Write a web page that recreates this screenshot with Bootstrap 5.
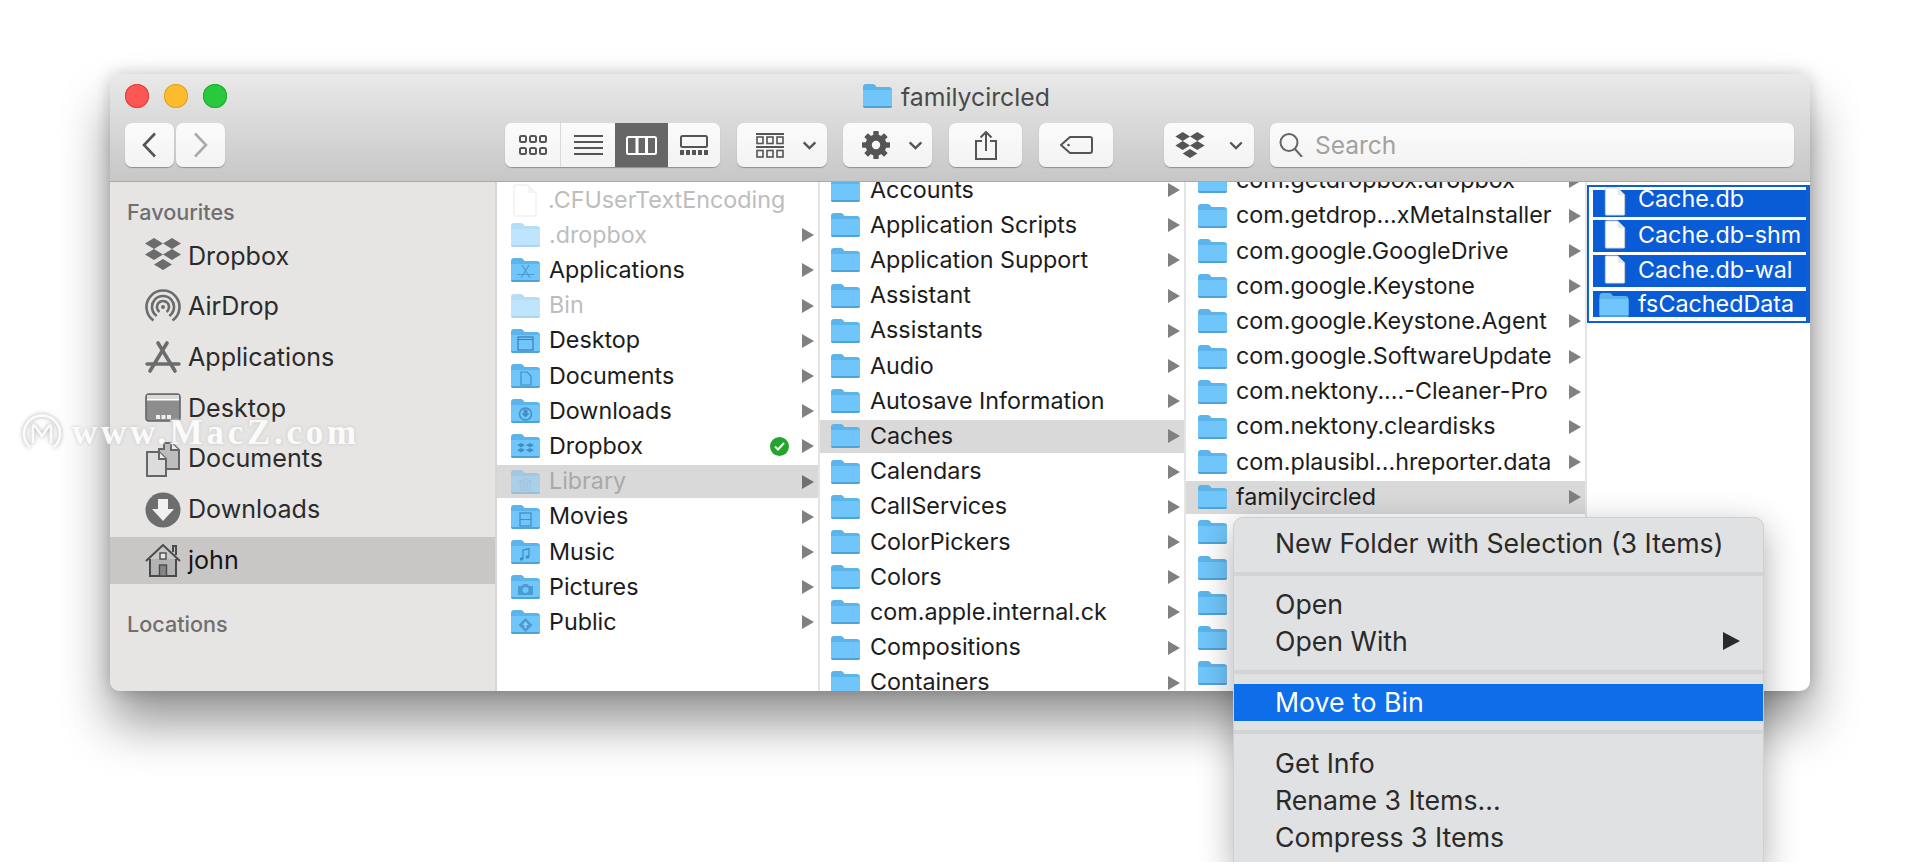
<!DOCTYPE html>
<html lang="en">
<head>
  <meta charset="UTF-8" />
  <title>familycircled</title>
  <link href="https://cdn.jsdelivr.net/npm/bootstrap@5.3.0/dist/css/bootstrap.min.css" rel="stylesheet" />
  <style>
    html, body { height: 100%; }
    body { margin: 0; background: #fff; overflow: hidden; font-family: Inter, "Liberation Sans", sans-serif; }
    .stage { position: relative; height: 862px; padding: 74px 0 0 110px; overflow: hidden; background: #fff; }
    .finder { width: 1700px; height: 617px; border-radius: 10px; overflow: hidden; display: flex; flex-direction: column;
      box-shadow: 0 32px 50px rgba(0,0,0,.42), 0 0 16px rgba(0,0,0,.2); background: #fff; }
    .finder-top { height: 108px; flex: none; padding: 10px 15px 0; background: linear-gradient(#e9e9e9, #c7c7c7); border-bottom: 1px solid #a9a9a9; }
    .light { width: 24px; height: 24px; border-radius: 50%; margin-right: 15px; }
    .light-r { background: #fc5753; box-shadow: inset 0 0 0 1px #df3d38; }
    .light-y { background: #fdbc2e; box-shadow: inset 0 0 0 1px #dd9f20; }
    .light-g { background: #28c83f; box-shadow: inset 0 0 0 1px #1daa2c; }
    .title-wrap { margin-left: 620px; height: 24px; color: #4a4a4a; font-size: 24.8px; line-height: 24px; }
    .title-wrap svg { margin-right: 8px; }
    .title-text { margin-top: 1px; }
    .tool-row { margin-top: 15px; height: 44px; }
    .tbtn { height: 44px; padding: 0; border: 0; border-radius: 7px; background: linear-gradient(#fbfbfb, #f3f3f3); box-shadow: 0 1px 1px rgba(0,0,0,.3);
      display: flex; align-items: center; justify-content: center; color: #555; }
    .tbtn svg { display: block; }
    .tbtn-wide { padding-left: 9px; }
    .view-group { display: flex; width: 215px; height: 44px; margin-left: 280px; border-radius: 7px; overflow: hidden; box-shadow: 0 1px 1px rgba(0,0,0,.3); background: #f8f8f8; }
    .view-group .tbtn { border-radius: 0; box-shadow: none; }
    .view-active { background: #666 !important; }
    .search-box { width: 524px; height: 44px; margin-left: 16px; border-radius: 7px; background: linear-gradient(#fbfbfb, #f3f3f3); box-shadow: 0 1px 1px rgba(0,0,0,.3);
      display: flex; align-items: center; padding-left: 9px; color: #a2a2a2; font-size: 24.5px; }
    .search-box svg { margin-right: 9px; }
    .finder-body { flex: 1; min-height: 0; display: flex; }
    .side { width: 387px; flex: none; background: #e6e5e4; border-right: 2px solid #d6d6d6; padding-top: 18px; color: #2b2b2b; }
    .side-head { height: 24px; line-height: 24px; padding-left: 17px; font-size: 21.6px; font-weight: 500; color: #6f6f6f; }
    .side-list { margin-top: 7px; }
    .side-item { height: 50.7px; display: flex; align-items: center; padding-left: 35px; font-size: 25.1px; border-top: 2px solid transparent; border-bottom: 2px solid transparent; background-clip: padding-box; }
    .side-item svg { width: 36px; height: 36px; margin-right: 7px; flex: none; }
    .side-on { background-color: #c8c7c6; color: #161616; }
    .side-head2 { margin-top: 26px; }
    .fcol { flex: none; overflow: hidden; border-right: 2px solid #e4e4e4; }
    .fcol1 { width: 323px; }
    .fcol2 { width: 366px; }
    .fcol3 { width: 401px; }
    .fcol4 { flex: 1; border-right: 0; }
    .fcol1 .rows { margin-top: .5px; }
    .fcol2 .rows { margin-top: -9.5px; }
    .fcol3 .rows { margin-top: -19px; }
    .frow { height: 35.2px; display: flex; align-items: center; padding-right: 4px; font-size: 23.3px; color: #1c1c1c; white-space: nowrap;
      border-top: 1px solid transparent; border-bottom: 1px solid transparent; background-clip: padding-box; }
    .fcol1 .frow { padding-left: 14px; }
    .fcol2 .frow { padding-left: 11px; }
    .fcol3 .frow { padding-left: 12px; }
    .frow .ficon { width: 29px; height: 24px; margin-right: 9px; flex: none; }
    .fcol2 .frow .ficon { margin-right: 10px; }
    .frow .fdoc { width: 24px; height: 33px; margin-left: 2px; margin-right: 11px; flex: none; }
    .frow-name { flex: 1; min-width: 0; }
    .frow-arrow { width: 0; height: 0; flex: none; border-left: 12px solid #808080; border-top: 7px solid transparent; border-bottom: 7px solid transparent; }
    .frow-dim { color: #bdbdbd; }
    .frow-dim .ficon, .frow-dim .fdoc { opacity: .45; }
    .frow-on { background-color: #d9d9d9; }
    .frow-on.frow-dim { color: #a9a9a9; }
    .frow-on.frow-dim .frow-arrow { border-left-color: #707070; }
    .check-dot { width: 19px; height: 19px; border-radius: 50%; background: #22a52b; margin-right: 13px; flex: none; display: flex; align-items: center; justify-content: center; }
    .pick-box { margin-top: 3px; height: 138px; border: 2px solid #0c5fd8; border-right-width: 4px; padding: 3px 0 0 4px; display: flex; flex-direction: column; gap: 3px; }
    .pick-row { height: 32px; background: #0a5cd6; color: #fff; font-size: 23.3px; display: flex; align-items: center; flex: none; }
    .pick-row svg { flex: none; }
    .pick-text { margin-top: -2px; }
    .pick-first { height: 27px; }
    .pick-last { height: 26px; margin-top: 1px; }
    .pick-row .fdoc { width: 22px; height: 29px; margin: -3px 12px 0 11px; }
    .pick-first .fdoc { margin-top: -4px; }
    .pick-first .pick-text { margin-top: -9px; }
    .pick-last .pick-text { margin-top: 1px; }
    .pick-row .ficon { width: 30px; height: 24px; margin: 2px 9px 0 6px; }
    .ctx-menu.dropdown-menu { display: block; position: absolute; left: 1233px; top: 517px; width: 531px; height: 350px; padding: 6.5px 0 0; margin: 0; border: 1px solid #cfcfcf;
      border-radius: 10px 10px 0 0; background: #e0e1e2; box-shadow: 0 10px 34px rgba(0,0,0,.32); font-size: 26.7px; color: #2a2a2a; }
    .ctx-menu .dropdown-item { height: 37px; line-height: 37px; padding: 0 0 0 41px; color: #2a2a2a; display: flex; justify-content: space-between; align-items: center; background: transparent; }
    .ctx-menu .dropdown-item.active { background: #0e6de8; color: #fff; }
    .ctx-menu .dropdown-divider { height: 4px; border: 0; background: #d3d4d5; opacity: 1; margin: 10.5px 0 9.5px; }
    .ctx-menu .divider-bin { margin: 9px 0 10.5px; }
    .ctx-arrow { width: 0; height: 0; margin-right: 23px; border-left: 17px solid #2a2a2a; border-top: 9.5px solid transparent; border-bottom: 9.5px solid transparent; }
    .stamp { position: absolute; left: 22px; top: 410px; display: flex; align-items: center; color: rgba(255,255,255,.85); text-shadow: 0 0 3px rgba(255,255,255,.8), 0 0 3px rgba(110,110,110,.55);
      font-family: "Liberation Serif", serif; font-weight: 700; font-size: 35px; letter-spacing: 3.75px; white-space: nowrap; line-height: 46px; }
    .stamp svg { margin-right: 10px; filter: drop-shadow(0 0 2px rgba(90,90,90,.6)); }
  </style>
</head>
<body>
  <svg class="d-none" xmlns="http://www.w3.org/2000/svg">
    <symbol id="folder" viewBox="0 0 29 24">
      <path d="M0 3q0-3 3-3h7q1.500 0 2.500 1.500l1 1.500h12q3.500 0 3.500 3v15q0 3-3 3H3q-3 0-3-3z" fill="#5db4ea"/>
      <path d="M0 6h29v15.500q0 2.500-3 2.500H3q-3 0-3-2.500z" fill="#70c6fb"/>
      <path d="M0 22h29q0 2-3 2H3q-3 0-3-2z" fill="#4fa3d8"/>
    </symbol>
    <symbol id="doc" viewBox="0 0 24 33">
      <path d="M1 2q0-1 1-1h13l8 8v22q0 1-1 1H2q-1 0-1-1z" fill="#fff" stroke="#cfcfcf"/>
      <path d="M15 1v8h8z" fill="#e9e9e9"/>
    </symbol>
    <symbol id="dbx" viewBox="0 0 36 32">
      <path d="M9 0l9 5.500-9 5.500-9-5.500zM27 0l9 5.500-9 5.500-9-5.500zM9 11l9 5.500-9 5.500-9-5.500zM27 11l9 5.500-9 5.500-9-5.500zM18 21l9 5.500-9 5.500-9-5.500z" fill="currentColor"/>
    </symbol>
    <symbol id="chev" viewBox="0 0 16 10">
      <path d="M1.500 1.500L8 8l6.500-6.500" fill="none" stroke="currentColor" stroke-width="2.600"/>
    </symbol>
  </svg>

  <div class="stage">
    <div class="finder">
      <div class="finder-top">
        <div class="d-flex align-items-center">
          <div class="light light-r"></div>
          <div class="light light-y"></div>
          <div class="light light-g"></div>
          <div class="title-wrap d-flex align-items-center">
            <svg width="31" height="24"><use href="#folder"/></svg><span class="title-text">familycircled</span>
          </div>
        </div>
        <div class="tool-row d-flex">
          <button class="btn tbtn" style="width:49px"><svg width="15" height="26" viewBox="0 0 15 26"><path d="M13 1.500L2 13l11 11.500" fill="none" stroke="#555" stroke-width="2.600"/></svg></button>
          <button class="btn tbtn" style="width:49px;margin-left:2px"><svg width="15" height="26" viewBox="0 0 15 26"><path d="M2 1.500L13 13 2 24.500" fill="none" stroke="#ababab" stroke-width="2.600"/></svg></button>

          <div class="view-group">
            <button class="btn tbtn" style="width:56px;border-right:1px solid #d9d9d9"><svg width="28" height="20" viewBox="0 0 28 20" fill="none" stroke="#555" stroke-width="2"><rect x="1" y="1" width="6" height="6" rx="1.500"/><rect x="11" y="1" width="6" height="6" rx="1.500"/><rect x="21" y="1" width="6" height="6" rx="1.500"/><rect x="1" y="13" width="6" height="6" rx="1.500"/><rect x="11" y="13" width="6" height="6" rx="1.500"/><rect x="21" y="13" width="6" height="6" rx="1.500"/></svg></button>
            <button class="btn tbtn" style="width:54px"><svg width="29" height="20" viewBox="0 0 29 20" stroke="#555" stroke-width="2"><path d="M0 1h29M0 7h29M0 13h29M0 19h29"/></svg></button>
            <button class="btn tbtn view-active" style="width:53px"><svg width="31" height="19" viewBox="0 0 31 19" fill="none" stroke="#fff" stroke-width="2"><rect x="1" y="1" width="29" height="17" rx="1.500"/><path d="M11 1v17M20.500 1v17" stroke-width="3"/></svg></button>
            <button class="btn tbtn" style="width:52px"><svg width="28" height="20" viewBox="0 0 28 20" fill="#555"><rect x="1" y="1" width="26" height="11" rx="1.500" fill="none" stroke="#555" stroke-width="2"/><rect x="0" y="15" width="4" height="5"/><rect x="6" y="15" width="4" height="5"/><rect x="12" y="15" width="4" height="5"/><rect x="18" y="15" width="4" height="5"/><rect x="24" y="15" width="4" height="5"/></svg></button>
          </div>

          <button class="btn tbtn tbtn-wide" style="width:90px;margin-left:17px"><svg width="28" height="25" viewBox="0 0 28 25" style="margin-right:18px"><path d="M0 1h28M0 14h28" stroke="#555" stroke-width="2"/><g fill="none" stroke="#555" stroke-width="1.600"><rect x="1" y="4" width="6" height="6.500"/><rect x="11" y="4" width="6" height="6.500"/><rect x="21" y="4" width="6" height="6.500"/><rect x="1" y="17.500" width="6" height="6.500"/><rect x="11" y="17.500" width="6" height="6.500"/><rect x="21" y="17.500" width="6" height="6.500"/></g></svg><svg width="15" height="9"><use href="#chev"/></svg></button>
          <button class="btn tbtn tbtn-wide" style="width:89px;margin-left:16px"><svg width="28" height="28" viewBox="0 0 28 28" style="margin-right:18px"><circle cx="14" cy="14" r="10.500" fill="#555"/><g fill="#555"><rect x="11.300" y="0" width="5.400" height="28" rx=".8"/><rect x="11.300" y="0" width="5.400" height="28" rx=".8" transform="rotate(45 14 14)"/><rect x="11.300" y="0" width="5.400" height="28" rx=".8" transform="rotate(90 14 14)"/><rect x="11.300" y="0" width="5.400" height="28" rx=".8" transform="rotate(135 14 14)"/></g><circle cx="14" cy="14" r="4.200" fill="#f8f8f8"/></svg><svg width="15" height="9"><use href="#chev"/></svg></button>
          <button class="btn tbtn" style="width:73px;margin-left:17px"><svg width="22" height="29" viewBox="0 0 22 29" fill="none" stroke="#555" stroke-width="2"><path d="M7 10H1v18h20V10h-6M11 20V1.500M5.500 6.500L11 1l5.500 5.500"/></svg></button>
          <button class="btn tbtn" style="width:74px;margin-left:17px"><svg width="33" height="18" viewBox="0 0 33 18" fill="none" stroke="#555" stroke-width="2"><path d="M10 1h20q2 0 2 2v12q0 2-2 2H10L1 9z"/><circle cx="8.500" cy="9" r="1.300" fill="#555" stroke="none"/></svg></button>
          <button class="btn tbtn" style="width:90px;margin-left:51px"><svg width="30" height="26" class="me-4" style="color:#555"><use href="#dbx"/></svg><svg width="14" height="9"><use href="#chev"/></svg></button>
          <div class="search-box"><svg width="27" height="24" viewBox="0 0 27 24" fill="none" stroke="#666" stroke-width="2"><circle cx="10" cy="9.500" r="8.500"/><path d="M16 16l7 8"/></svg>Search</div>
        </div>
      </div>

      <div class="finder-body">
        <div class="side">
          <div class="side-head">Favourites</div>
          <div class="side-list">
            <div class="side-item"><svg viewBox="0 0 36 36" style="color:#6c6c6c"><use href="#dbx" width="36" height="32"/></svg>Dropbox</div>
            <div class="side-item"><svg viewBox="0 0 36 36" fill="none" stroke="#6c6c6c" stroke-width="2.600"><path d="M8.500 31.500A16.500 16.500 0 1 1 27.500 31.500M11.700 27A11 11 0 1 1 24.300 27M14.600 22.900A6 6 0 1 1 21.400 22.900"/><circle cx="18" cy="18" r="2" fill="#6c6c6c" stroke="none"/></svg>AirDrop</div>
            <div class="side-item"><svg viewBox="0 0 36 36" fill="none" stroke="#6c6c6c"><path d="M13 3l17 28M22 3L5 31" stroke-width="3.600" stroke-linecap="round"/><path d="M2 24h32" stroke-width="3.400" stroke-linecap="round"/></svg>Applications</div>
            <div class="side-item"><svg viewBox="0 0 36 36"><rect x="1" y="4" width="34" height="27" rx="3" fill="#8d8d8d" stroke="#666" stroke-width="1.600"/><rect x="2" y="5" width="32" height="5" fill="#d9d9d9"/><rect x="2" y="9" width="32" height="1.500" fill="#fff"/><rect x="11" y="25" width="4" height="4" fill="#eee"/><rect x="16.500" y="25" width="4" height="4" fill="#eee"/><rect x="22" y="25" width="4" height="4" fill="#eee"/></svg>Desktop</div>
            <div class="side-item"><svg viewBox="0 0 36 36" stroke="#666" stroke-width="2"><path d="M19 2h8l7 7v19H14V8h5z" fill="#bdbdbd"/><path d="M2 11h12l7 7v17H2z" fill="#dcdcdc"/><path d="M14 11v7h7M26 2v7h8" fill="#eee"/></svg>Documents</div>
            <div class="side-item"><svg viewBox="0 0 36 36"><circle cx="18" cy="18" r="17.500" fill="#6d6d6d"/><path d="M13 7h10v10h6L18 29 7 17h6z" fill="#f1f1f1"/></svg>Downloads</div>
            <div class="side-item side-on"><svg viewBox="0 0 36 36" fill="none" stroke="#4a4a4a" stroke-width="2"><path d="M5 17v17h26V17" fill="#b3b3b3"/><path d="M1 19L18 3l17 16M28 10V4h3v9"/><rect x="15" y="11" width="6" height="6" fill="#e6e6e6" stroke-width="1.400"/><rect x="14.500" y="23" width="7" height="11" fill="#858585" stroke-width="1.400"/></svg>john</div>
          </div>
          <div class="side-head side-head2">Locations</div>
        </div>
        <div class="fcol fcol1"><div class="rows" id="col1"></div></div>
        <div class="fcol fcol2"><div class="rows" id="col2"></div></div>
        <div class="fcol fcol3"><div class="rows" id="col3"></div></div>
        <div class="fcol fcol4">
          <div class="pick-box">
            <div class="pick-row pick-first"><svg class="fdoc"><use href="#doc" width="22" height="29"/></svg><span class="pick-text">Cache.db</span></div>
            <div class="pick-row"><svg class="fdoc"><use href="#doc" width="22" height="29"/></svg><span class="pick-text">Cache.db-shm</span></div>
            <div class="pick-row"><svg class="fdoc"><use href="#doc" width="22" height="29"/></svg><span class="pick-text">Cache.db-wal</span></div>
            <div class="pick-row pick-last"><svg class="ficon"><use href="#folder" width="30" height="24"/></svg><span class="pick-text">fsCachedData</span></div>
          </div>
        </div>
      </div>
    </div>

    <div class="stamp">
      <svg width="40" height="40" viewBox="0 0 40 40" fill="none" stroke="rgba(255,255,255,.9)" stroke-width="2.600"><path d="M8 34A18 18 0 1 1 32 34"/><path d="M11 30V14q0-2 2-1l7 10 7-10q2-1 2 1v16"/></svg>
      <span>www.MacZ.com</span>
    </div>

    <div class="dropdown-menu ctx-menu">
      <a class="dropdown-item" href="#">New Folder with Selection (3 Items)</a>
      <hr class="dropdown-divider">
      <a class="dropdown-item" href="#">Open</a>
      <a class="dropdown-item" href="#">Open With<span class="ctx-arrow"></span></a>
      <hr class="dropdown-divider" style="margin-bottom:10px">
      <a class="dropdown-item active" href="#">Move to Bin</a>
      <hr class="dropdown-divider divider-bin">
      <a class="dropdown-item" href="#">Get Info</a>
      <a class="dropdown-item" href="#">Rename 3 Items...</a>
      <a class="dropdown-item" href="#">Compress 3 Items</a>
    </div>
  </div>

  <script src="https://cdn.jsdelivr.net/npm/bootstrap@5.3.0/dist/js/bootstrap.bundle.min.js"></script>
  <script>
    // small marks printed on the special folders
    const glyphs = {
      apps: '<path d="M11 7l8 13M18 7l-8 13M6 16.500h17" fill="none" stroke="#4a9bd1" stroke-width="1.200"/>',
      window: '<rect x="7" y="8" width="15" height="13" fill="none" stroke="#3f7fb0" stroke-width="1.200"/><path d="M7 10.500h15" stroke="#3f7fb0"/>',
      paper: '<path d="M10 8h6l4 4v9H10z" fill="none" stroke="#3f8fc4" stroke-width="1.200"/>',
      down: '<circle cx="14.500" cy="15" r="6" fill="none" stroke="#3f8fc4" stroke-width="1.500"/><path d="M12.500 10.500h4v4h2l-4 4-4-4h2z" fill="#3f8fc4"/>',
      dbx: '<path d="M10 9l4 2-4 2.500-4-2.500zM19 9l4 2-4 2.500-4-2.500zM10 14l4 2-4 2.500-4-2.500zM19 14l4 2-4 2.500-4-2.500z" fill="#3f8fc4"/>',
      bank: '<path d="M8 12l6.500-3.500L21 12zM8 20h13M10 13v6M13 13v6M16 13v6M19 13v6" fill="none" stroke="#5aa8da" stroke-width="1.100"/>',
      film: '<rect x="9" y="8" width="11" height="13" fill="none" stroke="#3f8fc4" stroke-width="1.300"/><path d="M9 14.500h11" stroke="#3f8fc4"/>',
      note: '<path d="M12 19V10l6-1.500V17" fill="none" stroke="#3f8fc4" stroke-width="1.300"/><circle cx="10.500" cy="19" r="1.800" fill="#3f8fc4"/><circle cx="16.500" cy="17" r="1.800" fill="#3f8fc4"/>',
      camera: '<path d="M7 11h4l1.500-2h4l1.500 2h4v9H7z" fill="#4a9bd1"/><circle cx="14.500" cy="15" r="3" fill="#70c6fb"/>',
      pub: '<path d="M14.500 8l7 7-7 7-7-7z" fill="#4a9bd1"/><path d="M14.500 11.500l-3 3.500h2v3h2v-3h2z" fill="#8cd2fb"/>'
    };

    function folderSvg(mark) {
      const extra = mark ? `<svg viewBox="0 0 29 24" class="position-absolute top-0 start-0" width="29" height="24">${glyphs[mark]}</svg>` : '';
      return `<span class="ficon position-relative d-block"><svg width="29" height="24" class="d-block"><use href="#folder"/></svg>${extra}</span>`;
    }

    function renderRow(r) {
      const cls = ['frow'];
      if (r.dim) cls.push('frow-dim');
      if (r.on) cls.push('frow-on');
      const icon = r.file ? '<svg class="fdoc"><use href="#doc" width="24" height="33"/></svg>' : r.blank ? folderSvg() : folderSvg(r.mark);
      const check = r.check ? '<span class="check-dot"><svg width="11" height="9" viewBox="0 0 11 9"><path d="M1 4.500L4 7.500 10 1" fill="none" stroke="#fff" stroke-width="2"/></svg></span>' : '';
      const arrow = r.file || r.blank ? '' : '<span class="frow-arrow"></span>';
      return `<div class="${cls.join(' ')}">${icon}<span class="frow-name">${r.name || ''}</span>${check}${arrow}</div>`;
    }

    const col1 = [
      { name: '.CFUserTextEncoding', dim: true, file: true },
      { name: '.dropbox', dim: true },
      { name: 'Applications', mark: 'apps' },
      { name: 'Bin', dim: true },
      { name: 'Desktop', mark: 'window' },
      { name: 'Documents', mark: 'paper' },
      { name: 'Downloads', mark: 'down' },
      { name: 'Dropbox', mark: 'dbx', check: true },
      { name: 'Library', mark: 'bank', dim: true, on: true },
      { name: 'Movies', mark: 'film' },
      { name: 'Music', mark: 'note' },
      { name: 'Pictures', mark: 'camera' },
      { name: 'Public', mark: 'pub' }
    ];
    const col2 = ['Accounts', 'Application Scripts', 'Application Support', 'Assistant', 'Assistants', 'Audio', 'Autosave Information',
      'Caches', 'Calendars', 'CallServices', 'ColorPickers', 'Colors', 'com.apple.internal.ck', 'Compositions', 'Containers']
      .map(name => ({ name, on: name === 'Caches' }));
    const col3 = ['com.getdropbox.dropbox', 'com.getdrop...xMetaInstaller', 'com.google.GoogleDrive', 'com.google.Keystone', 'com.google.Keystone.Agent',
      'com.google.SoftwareUpdate', 'com.nektony....-Cleaner-Pro', 'com.nektony.cleardisks', 'com.plausibl...hreporter.data', 'familycircled']
      .map(name => ({ name, on: name === 'familycircled' }));
    for (let i = 0; i < 5; i++) col3.push({ blank: true });

    document.getElementById('col1').innerHTML = col1.map(renderRow).join('');
    document.getElementById('col2').innerHTML = col2.map(renderRow).join('');
    document.getElementById('col3').innerHTML = col3.map(renderRow).join('');
  </script>
</body>
</html>
